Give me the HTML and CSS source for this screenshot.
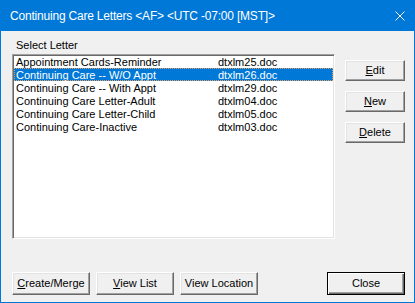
FILE: index.html
```html
<!DOCTYPE html>
<html lang="en">
<head>
    <meta charset="UTF-8">
    <title>Continuing Care Letters</title>
    <link rel="stylesheet" href="styles.css">
</head>
<body>
    <div class="window">
        <div class="titlebar">
            <span class="title">Continuing Care Letters &lt;AF&gt; &lt;UTC -07:00 [MST]&gt;</span>
            <svg class="close-x" width="10" height="10" viewBox="0 0 10 10">
                <path d="M0.5 0.5 L9.5 9.5 M9.5 0.5 L0.5 9.5" stroke="#fff" stroke-width="1" fill="none"/>
            </svg>
        </div>

        <div class="client">
            <div class="label">Select Letter</div>

            <div class="main-row">
                <div class="listbox">
                    <div class="item"><span>Appointment Cards-Reminder</span><span>dtxlm25.doc</span></div>
                    <div class="item selected"><span>Continuing Care -- W/O Appt</span><span>dtxlm26.doc</span></div>
                    <div class="item"><span>Continuing Care -- With Appt</span><span>dtxlm29.doc</span></div>
                    <div class="item"><span>Continuing Care Letter-Adult</span><span>dtxlm04.doc</span></div>
                    <div class="item"><span>Continuing Care Letter-Child</span><span>dtxlm05.doc</span></div>
                    <div class="item"><span>Continuing Care-Inactive</span><span>dtxlm03.doc</span></div>
                </div>

                <div class="side-buttons">
                    <button class="btn side"><u>E</u>dit</button>
                    <button class="btn side"><u>N</u>ew</button>
                    <button class="btn side"><u>D</u>elete</button>
                </div>
            </div>

            <div class="bottom-row">
                <button class="btn wide"><u>C</u>reate/Merge</button>
                <button class="btn wide"><u>V</u>iew List</button>
                <button class="btn wide">View Location</button>
                <button class="btn wide default close-btn">Close</button>
            </div>
        </div>
    </div>
</body>
</html>
```

FILE: styles.css
```css
:root {
    --accent: #0078d7;
    --face: #f0f0f0;
}

body {
    margin: 0;
    font-family: 'Liberation Sans', Arial, sans-serif;
    font-size: 11px;
    color: #000;
}

.window {
    width: 415px;
    height: 303px;
    box-sizing: border-box;
    padding: 0 1px 1px;
    background: var(--accent);
    display: flex;
    flex-direction: column;
}

.titlebar {
    height: 31px;
    display: flex;
    align-items: center;
    padding: 0 9px 0 9px;
    color: #fff;
}

.title {
    font-size: 12px;
    line-height: 16px;
    letter-spacing: -0.2px;
}

.close-x {
    margin-left: auto;
    display: block;
}

.client {
    flex: 1;
    background: var(--face);
    padding: 8px 9px 0 11px;
    display: flex;
    flex-direction: column;
}

.label {
    line-height: 13px;
    padding-left: 4px;
    margin-bottom: 2px;
}

.main-row {
    display: flex;
    gap: 10px;
}

.listbox {
    width: 323px;
    height: 185px;
    box-sizing: border-box;
    background: #fff;
    border-top: 1px solid #a0a0a0;
    border-left: 1px solid #a0a0a0;
    border-right: 1px solid #fff;
    border-bottom: 1px solid #fff;
    box-shadow: inset 1px 1px 0 #696969, inset -1px -1px 0 #e3e3e3;
    padding: 0 1px;
}

.item {
    display: grid;
    grid-template-columns: 202px 1fr;
    height: 13px;
    line-height: 14px;
    padding-left: 2px;
    white-space: nowrap;
}

.item.selected {
    background: var(--accent);
    color: #fff;
    outline: 1px dotted #e8a060;
    outline-offset: -1px;
}

.side-buttons {
    margin-top: 6px;
    display: flex;
    flex-direction: column;
    gap: 10px;
}

.btn {
    font-family: inherit;
    font-size: 11px;
    color: #000;
    background: var(--face);
    border-top: 1px solid #fff;
    border-left: 1px solid #fff;
    border-right: 1px solid #696969;
    border-bottom: 1px solid #696969;
    box-shadow: inset -1px -1px 0 #a0a0a0, inset 1px 1px 0 #e3e3e3;
    padding: 0;
    margin: 0;
    box-sizing: border-box;
    line-height: 13px;
}

.btn.side {
    width: 60px;
    height: 21px;
}

.bottom-row {
    margin-top: 33px;
    display: flex;
    gap: 6px;
}

.btn.wide {
    width: 78px;
    height: 23px;
}

.btn.default {
    border: 1px solid #000;
    box-shadow: inset 1px 1px 0 #fff, inset -1px -1px 0 #696969, inset -2px -2px 0 #a0a0a0;
}

.close-btn {
    margin-left: auto;
}
```
